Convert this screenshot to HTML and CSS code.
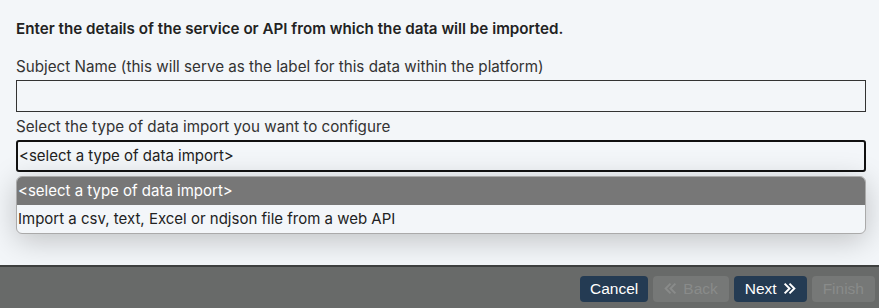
FILE: index.html
```html
<!DOCTYPE html>
<html lang="en">
  <head>
    <meta charset="UTF-8" />
    <title>Import data</title>
    <link rel="stylesheet" href="styles.css">
  </head>
  <body>
    <div class="wizard">
      <div class="content">
        <p class="intro">Enter the details of the service or API from which the data will be imported.</p>

        <label class="field-label" for="subject">Subject Name (this will serve as the label for this data within the platform)</label>
        <input id="subject" class="text-input" type="text">

        <label class="field-label">Select the type of data import you want to configure</label>
        <div class="select-wrap">
          <div class="select">&lt;select a type of data import&gt;</div>
          <ul class="options">
            <li class="option selected">&lt;select a type of data import&gt;</li>
            <li class="option">Import a csv, text, Excel or ndjson file from a web API</li>
          </ul>
        </div>
      </div>

      <div class="footer">
        <button class="btn">Cancel</button>
        <button class="btn" disabled>
          <svg class="chev" width="13" height="13" viewBox="0 0 12 12"><path d="M6 1.5 1.5 6 6 10.5M10.5 1.5 6 6l4.5 4.5" fill="none" stroke="currentColor" stroke-width="1.8"/></svg>
          Back
        </button>
        <button class="btn">
          Next
          <svg class="chev" width="13" height="13" viewBox="0 0 12 12"><path d="M1.5 1.5 6 6l-4.5 4.5M6 1.5 10.5 6 6 10.5" fill="none" stroke="currentColor" stroke-width="1.8"/></svg>
        </button>
        <button class="btn" disabled>Finish</button>
      </div>
    </div>
  </body>
</html>
```

FILE: styles.css
```css
* {
  box-sizing: border-box;
}

html, body {
  margin: 0;
  height: 100%;
}

body {
  background-color: #f3f6f9;
  font-family: Inter, "Noto Sans", sans-serif;
  color: #222;
}

.wizard {
  display: flex;
  flex-direction: column;
  height: 308px;
}

.content {
  flex: 1;
  padding: 20px 13px 0 16px;
  display: flex;
  flex-direction: column;
}

.intro {
  margin: 0 0 20px;
  font-size: 15.2px;
  font-weight: 600;
  line-height: 18px;
}

.field-label {
  font-size: 15.2px;
  line-height: 18px;
  color: #333;
  margin-bottom: 4px;
}

.text-input {
  height: 32px;
  border: 1px solid #333;
  background-color: #f3f6f9;
  margin: 0 0 6px;
  font: inherit;
}

.select-wrap {
  position: relative;
}

.select {
  height: 32px;
  border: 2px solid #111;
  border-radius: 3px;
  padding: 0 0 0 1px;
  font-size: 15px;
  line-height: 28px;
  color: #222;
}

.options {
  position: absolute;
  top: 36px;
  left: 0;
  right: 0;
  margin: 0;
  padding: 0;
  list-style: none;
  background-color: #f3f6f9;
  border: 1px solid #aaa;
  border-radius: 6px;
  overflow: hidden;
  box-shadow: 0 6px 30px rgba(0, 0, 0, 0.22);
}

.option {
  height: 28px;
  padding-left: 1px;
  font-size: 15px;
  line-height: 28px;
  color: #222;
}

.option.selected {
  background-color: #777;
  color: #fff;
}

.footer {
  height: 43px;
  background-color: #686a69;
  border-top: 2px solid #3e403f;
  display: flex;
  justify-content: flex-end;
  align-items: center;
  gap: 5px;
  padding: 2px 4px 0 0;
}

.btn {
  height: 26px;
  padding: 0 11px;
  border: none;
  border-radius: 4px;
  background-color: #243b53;
  color: #fff;
  font-family: "Liberation Sans", Arial, sans-serif;
  font-size: 15.5px;
  display: flex;
  align-items: center;
  gap: 6px;
}

.btn:first-child {
  padding: 0 10px;
}

.btn:disabled {
  background-color: #767877;
  color: #898b8a;
}
```
